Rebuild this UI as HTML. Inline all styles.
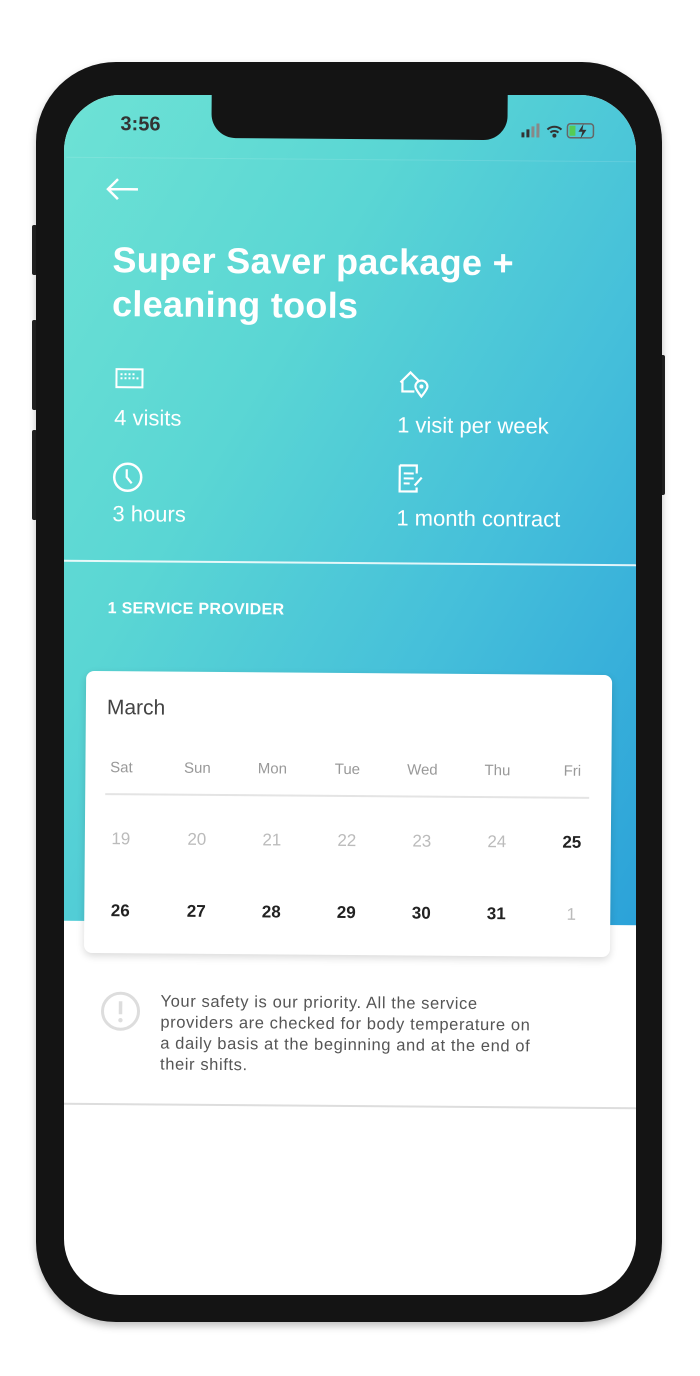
<!DOCTYPE html>
<html><head><meta charset="utf-8"><style>
*{margin:0;padding:0;box-sizing:border-box}
body{width:700px;height:1376px;background:#fff;position:relative;overflow:hidden;font-family:"Liberation Sans",sans-serif}
.phone{position:absolute;left:36px;top:62px;width:626px;height:1260px;border-radius:80px;background:#141414;box-shadow:0 4px 8px rgba(0,0,0,.25)}
.btn{position:absolute;background:#222;border-radius:2px}
.screen{position:absolute;left:64px;top:95px;width:572px;height:1200px;border-radius:56px;overflow:hidden;background:#fff}
.in{position:absolute;left:-2px;top:0;width:576px;height:1200px;transform:rotate(0.45deg)}
.grad{position:absolute;left:-20px;top:-20px;width:620px;height:848px;background:linear-gradient(120deg,#6fe3d5 0%,#5ad6d4 35%,#45bfda 65%,#2aa0d9 100%)}
.notch{position:absolute;left:145px;top:-2px;width:296px;height:46px;background:#141414;border-radius:0 0 24px 24px}
.t{position:absolute;color:#fff;white-space:nowrap}
.c{position:absolute;font-size:15px;color:#999;text-align:center;width:40px}
.d{position:absolute;font-size:17px;color:#bbb;text-align:center;width:40px}
.b{color:#222;font-weight:bold}
</style></head><body>
<div class="btn" style="left:32px;top:225px;width:5px;height:50px"></div>
<div class="btn" style="left:32px;top:320px;width:5px;height:90px"></div>
<div class="btn" style="left:32px;top:430px;width:5px;height:90px"></div>
<div class="btn" style="left:660px;top:355px;width:5px;height:140px"></div>
<div class="phone"></div>
<div class="screen"><div class="in">
<div class="grad"></div>
<div style="position:absolute;left:0;top:64px;width:100%;height:1px;background:rgba(255,255,255,.12)"></div>
<div class="notch"></div>
<div class="t" style="left:54px;top:20px;font-size:20px;color:#333;font-weight:bold">3:56</div>
<div style="position:absolute;left:455px;top:24px">
<svg width="90" height="20"><rect x="0" y="12" width="3" height="5" fill="#333"/><rect x="5" y="9" width="3" height="8" fill="#333"/><rect x="10" y="6" width="3" height="11" fill="#888"/><rect x="15" y="3" width="3" height="14" fill="#888"/>
<path d="M26 9a10 10 0 0 1 14 0M29 12a6 6 0 0 1 8 0" stroke="#333" stroke-width="2" fill="none"/><circle cx="33" cy="15" r="2" fill="#333"/>
<rect x="46" y="3" width="26" height="14" rx="3" fill="none" stroke="#666" stroke-width="1.5"/><rect x="48" y="5" width="6" height="10" fill="#5c5"/><path d="M62 3l-5 8h4l-2 7 6-9h-4z" fill="#333"/></svg></div>
<svg style="position:absolute;left:40px;top:84px" width="36" height="24"><path d="M2 12h30M12 2L2 12l10 10" stroke="#fff" stroke-width="2.5" fill="none"/></svg>
<div class="t" style="left:47px;top:145px;font-size:36px;font-weight:bold;line-height:44px;letter-spacing:.3px">Super Saver package +<br>cleaning tools</div>
<svg style="position:absolute;left:50px;top:273px" width="30" height="24"><rect x="2" y="3" width="26" height="18" fill="none" stroke="#fff" stroke-width="2"/><g fill="#fff"><rect x="6" y="7" width="2" height="2"/><rect x="10" y="7" width="2" height="2"/><rect x="14" y="7" width="2" height="2"/><rect x="18" y="7" width="2" height="2"/><rect x="6" y="11" width="2" height="2"/><rect x="10" y="11" width="2" height="2"/><rect x="14" y="11" width="2" height="2"/><rect x="18" y="11" width="2" height="2"/><rect x="22" y="11" width="2" height="2"/></g></svg>
<div class="t" style="left:50px;top:312px;font-size:22px">4 visits</div>
<svg style="position:absolute;left:333px;top:273px" width="32" height="30"><path d="M3 14L13 4l8 8M5 12v11h12" stroke="#fff" stroke-width="2.2" fill="none"/><path d="M24 28c-4-5-6-8-6-10a6 6 0 0 1 12 0c0 2-2 5-6 10z" stroke="#fff" stroke-width="2.2" fill="none"/><circle cx="24" cy="18" r="2" fill="#fff"/></svg>
<div class="t" style="left:333px;top:317px;font-size:22px">1 visit per week</div>
<svg style="position:absolute;left:48px;top:368px" width="32" height="32"><circle cx="16" cy="16" r="13.5" stroke="#fff" stroke-width="2.5" fill="none"/><path d="M15 8v8l5 6" stroke="#fff" stroke-width="2.2" fill="none"/></svg>
<div class="t" style="left:49px;top:408px;font-size:22px">3 hours</div>
<svg style="position:absolute;left:333px;top:368px" width="30" height="30"><path d="M3 2h17v8M3 2v26h17v-4" stroke="#fff" stroke-width="2.2" fill="none"/><path d="M7 10h10M7 15h10M7 20h6" stroke="#fff" stroke-width="2"/><path d="M18 22l7-8" stroke="#fff" stroke-width="2.2"/></svg>
<div class="t" style="left:333px;top:410px;font-size:22px">1 month contract</div>
<div style="position:absolute;left:-10px;top:467px;width:600px;height:1.5px;background:rgba(255,255,255,.85)"></div>
<div class="t" style="left:45px;top:507px;font-size:16px;font-weight:bold;letter-spacing:.3px">1 SERVICE PROVIDER</div>
<div style="position:absolute;left:24px;top:578px;width:526px;height:282px;background:#fff;border-radius:8px;box-shadow:0 3px 8px rgba(0,0,0,.15)">
<div style="position:absolute;left:21px;top:25px;font-size:21px;color:#444">March</div>
<div class="c" style="left:16px;top:88px">Sat</div><div class="c" style="left:92px;top:88px">Sun</div><div class="c" style="left:167px;top:88px">Mon</div><div class="c" style="left:242px;top:88px">Tue</div><div class="c" style="left:317px;top:88px">Wed</div><div class="c" style="left:392px;top:88px">Thu</div><div class="c" style="left:467px;top:88px">Fri</div>
<div style="position:absolute;left:20px;top:122px;width:484px;height:1.5px;background:#e4e4e4"></div>
<div class="d" style="left:16px;top:158px">19</div><div class="d" style="left:92px;top:158px">20</div><div class="d" style="left:167px;top:158px">21</div><div class="d" style="left:242px;top:158px">22</div><div class="d" style="left:317px;top:158px">23</div><div class="d" style="left:392px;top:158px">24</div><div class="d b" style="left:467px;top:158px">25</div>
<div class="d b" style="left:16px;top:230px">26</div><div class="d b" style="left:92px;top:230px">27</div><div class="d b" style="left:167px;top:230px">28</div><div class="d b" style="left:242px;top:230px">29</div><div class="d b" style="left:317px;top:230px">30</div><div class="d b" style="left:392px;top:230px">31</div><div class="d" style="left:467px;top:230px">1</div>
</div>
<svg style="position:absolute;left:40px;top:897px" width="42" height="42"><circle cx="21" cy="21" r="18" stroke="#ddd" stroke-width="3" fill="none"/><path d="M21 11v13" stroke="#ddd" stroke-width="3.5"/><circle cx="21" cy="30" r="2.2" fill="#ddd"/></svg>
<div style="position:absolute;left:101px;top:898px;font-size:16.5px;letter-spacing:.6px;color:#555;line-height:21px;white-space:nowrap">Your safety is our priority. All the service<br>providers are checked for body temperature on<br>a daily basis at the beginning and at the end of<br>their shifts.</div>
<div style="position:absolute;left:-10px;top:1010px;width:600px;height:1.5px;background:#ddd"></div>
</div></div>
</body></html>
